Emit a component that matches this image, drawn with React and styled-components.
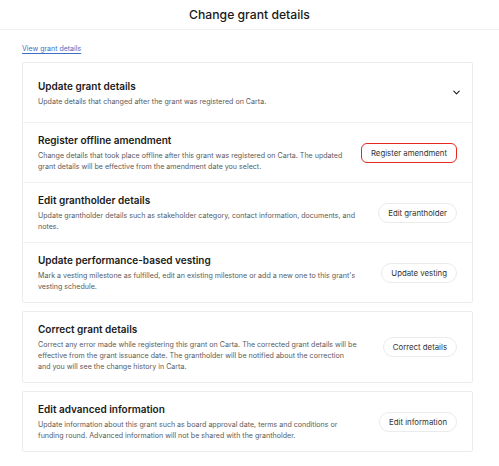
import styled, { createGlobalStyle } from "styled-components";

const GlobalStyle = createGlobalStyle`
  body {
    margin: 0;
    background: #ffffff;
    font-family: Inter, "Noto Sans", sans-serif;
    color: #1c1c1c;
  }
`;

const Header = styled.header`
  height: 29px;
  display: flex;
  align-items: center;
  justify-content: center;
  border-bottom: 1px solid #f1f1f1;

  h1 {
    margin: 0;
    font-size: 12.2px;
    font-weight: 500;
    color: #1a1a1a;
  }
`;

const Content = styled.main`
  padding: 14px 26px 0 22px;
  display: flex;
  flex-direction: column;
`;

const ViewLink = styled.a`
  align-self: flex-start;
  font-size: 7px;
  line-height: 10px;
  color: #3f6fc4;
  text-decoration: underline;
  text-underline-offset: 1.5px;
  margin-bottom: 8px;
  cursor: pointer;
`;

const Card = styled.section`
  border: 1px solid #ececec;
  border-radius: 2px;
  margin-bottom: 8px;
`;

const Row = styled.div`
  min-height: 59px;
  box-sizing: border-box;
  padding: 10px 15px;
  display: flex;
  align-items: center;
  justify-content: space-between;
  gap: 4px;

  & + & {
    border-top: 1px solid #f0f0f0;
  }
`;

const TextCol = styled.div`
  max-width: 320px;
  display: flex;
  flex-direction: column;
  gap: 2px;
`;

const Title = styled.h2`
  margin: 0;
  font-size: 10px;
  line-height: 15px;
  font-weight: 600;
  color: #1a1a1a;
`;

const Desc = styled.p`
  margin: 0;
  font-size: 7.1px;
  line-height: 11px;
  color: #5a5a5a;
`;

const PillButton = styled.button`
  flex-shrink: 0;
  height: 20px;
  padding: 0 9px;
  font-family: inherit;
  font-size: 7.8px;
  color: #333333;
  background: #ffffff;
  border: ${(p) => (p.$highlighted ? "1.5px solid #e8281f" : "1px solid #ebebeb")};
  border-radius: ${(p) => (p.$highlighted ? "6px" : "999px")};
  cursor: pointer;
`;

const Chevron = styled.svg`
  width: 9px;
  height: 9px;
  margin-right: -4px;
  flex-shrink: 0;
`;

function OptionRow({ title, description, action, highlighted, chevron }) {
  return (
    <Row>
      <TextCol>
        <Title>{title}</Title>
        <Desc>{description}</Desc>
      </TextCol>
      {chevron ? (
        <Chevron viewBox="0 0 10 10" fill="none">
          <path d="M2 3.5 L5 6.5 L8 3.5" stroke="#222" strokeWidth="1.3" strokeLinecap="round" strokeLinejoin="round" />
        </Chevron>
      ) : (
        <PillButton $highlighted={highlighted}>{action}</PillButton>
      )}
    </Row>
  );
}

export default function App() {
  return (
    <>
      <GlobalStyle />
      <Header>
        <h1>Change grant details</h1>
      </Header>
      <Content>
        <ViewLink>View grant details</ViewLink>
        <Card>
          <OptionRow
            chevron
            title="Update grant details"
            description="Update details that changed after the grant was registered on Carta."
          />
          <OptionRow
            highlighted
            title="Register offline amendment"
            description="Change details that took place offline after this grant was registered on Carta. The updated grant details will be effective from the amendment date you select."
            action="Register amendment"
          />
          <OptionRow
            title="Edit grantholder details"
            description="Update grantholder details such as stakeholder category, contact information, documents, and notes."
            action="Edit grantholder"
          />
          <OptionRow
            title="Update performance-based vesting"
            description="Mark a vesting milestone as fulfilled, edit an existing milestone or add a new one to this grant's vesting schedule."
            action="Update vesting"
          />
        </Card>
        <Card>
          <OptionRow
            title="Correct grant details"
            description="Correct any error made while registering this grant on Carta. The corrected grant details will be effective from the grant issuance date. The grantholder will be notified about the correction and you will see the change history in Carta."
            action="Correct details"
          />
        </Card>
        <Card>
          <OptionRow
            title="Edit advanced information"
            description="Update information about this grant such as board approval date, terms and conditions or funding round. Advanced information will not be shared with the grantholder."
            action="Edit information"
          />
        </Card>
      </Content>
    </>
  );
}
